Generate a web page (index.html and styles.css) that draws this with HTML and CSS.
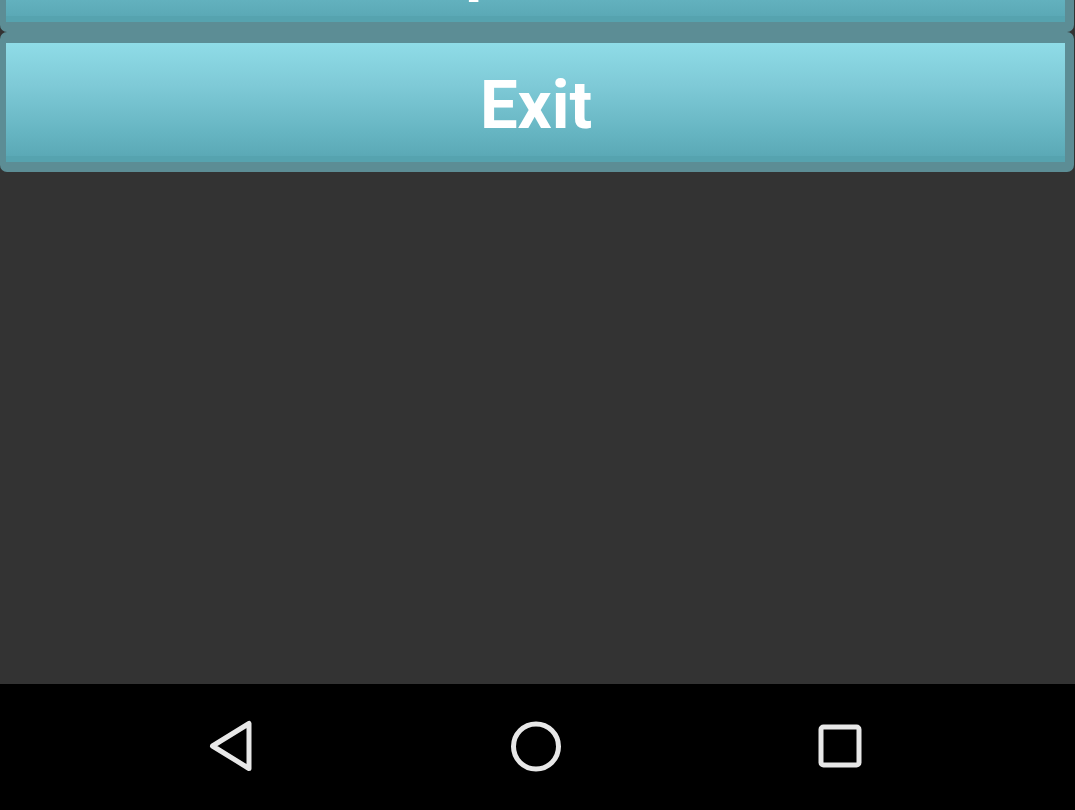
FILE: index.html
```html
<!DOCTYPE html>
<html>
<head>
<meta charset="utf-8">
<link rel="stylesheet" href="styles.css">
</head>
<body>
<div class="screen">
  <div class="content">
    <div class="menu">
      <div class="btn-frame"><div class="btn">Options</div></div>
      <div class="btn-frame"><div class="btn">Exit</div></div>
    </div>
  </div>
  <div class="navbar">
    <svg class="nav-icon" width="60" height="60" viewBox="0 0 60 60">
      <path d="M11.5 29 L48 6.5 L48 51.5 Z" fill="none" stroke="#e8e8e8" stroke-width="5" stroke-linejoin="round"/>
    </svg>
    <svg class="nav-icon" width="60" height="60" viewBox="0 0 60 60">
      <circle cx="30" cy="29.5" r="22.5" fill="none" stroke="#e8e8e8" stroke-width="5"/>
    </svg>
    <svg class="nav-icon" width="60" height="60" viewBox="0 0 60 60">
      <rect x="10" y="10" width="38" height="38" rx="2.5" fill="none" stroke="#e8e8e8" stroke-width="5"/>
    </svg>
  </div>
</div>
</body>
</html>
```
FILE: styles.css
```css
html, body {
  margin: 0;
  padding: 0;
  background: #333333;
}
.screen {
  width: 1075px;
  height: 810px;
  display: flex;
  flex-direction: column;
  overflow: hidden;
}
.content {
  height: 684px;
  background: #333333;
  overflow: hidden;
}
.menu {
  margin-top: -108px;
  display: flex;
  flex-direction: column;
}
.btn-frame {
  height: 140px;
  box-sizing: border-box;
  padding: 11px 9px 10px 6px;
  margin-right: 1px;
  background: #5c8d95;
  border-radius: 7px;
}
.btn {
  height: 100%;
  box-sizing: border-box;
  background: linear-gradient(to bottom, #8fdce7 0%, #7fcad7 35%, #66b5c2 75%, #58a6b3 100%);
  color: #ffffff;
  font-family: Roboto, "Liberation Sans", sans-serif;
  font-weight: bold;
  font-size: 67px;
  display: flex;
  align-items: center;
  justify-content: center;
  box-shadow: inset 0 -6px 0 #56a3af;
  padding-left: 1px;
  padding-top: 4px;
}
.navbar {
  height: 126px;
  background: #000000;
  display: flex;
  align-items: center;
  padding-left: 201px;
  gap: 245px;
}
.nav-icon {
  display: block;
  margin-top: -1px;
}
```
